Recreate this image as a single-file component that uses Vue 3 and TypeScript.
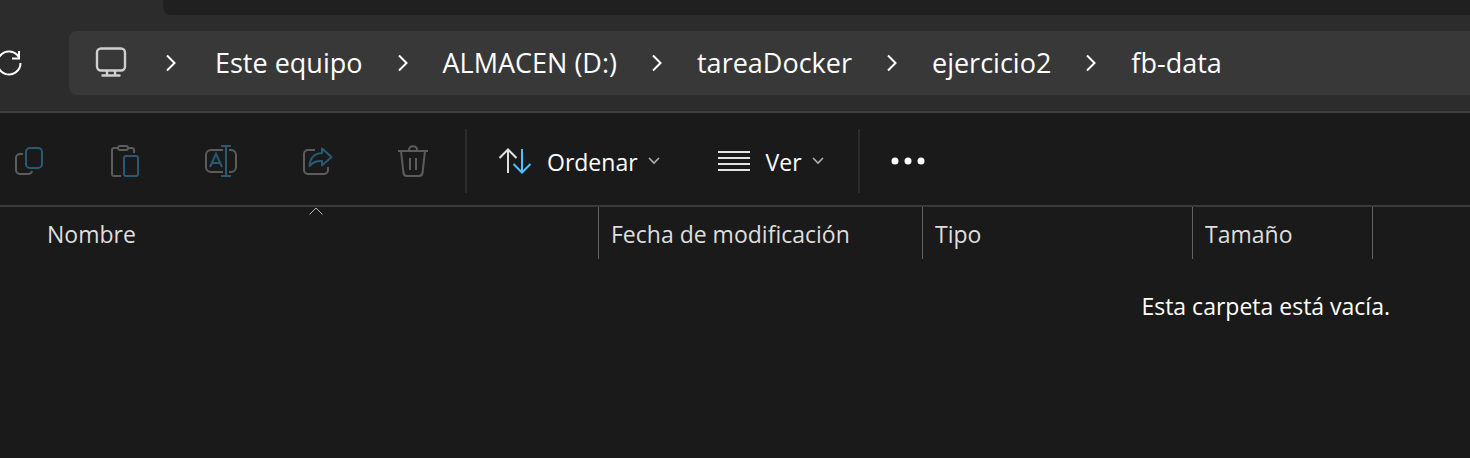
<script setup lang="ts">
interface Column {
  label: string
  className: string
  sorted: boolean
}

const crumbs: string[] = ['Este equipo', 'ALMACEN (D:)', 'tareaDocker', 'ejercicio2', 'fb-data']

const columns: Column[] = [
  { label: 'Nombre', className: 'col-name', sorted: true },
  { label: 'Fecha de modificación', className: 'col-date', sorted: false },
  { label: 'Tipo', className: 'col-type', sorted: false },
  { label: 'Tamaño', className: 'col-size', sorted: false },
]
</script>

<template>
  <div class="explorer">
    <header class="chrome">
      <div class="tabs"><div class="strip"></div></div>
      <div class="nav">
        <button class="refresh" type="button" aria-label="Actualizar">
          <svg width="32" height="32" viewBox="0 0 32 32" fill="none" stroke="#fff" stroke-width="2">
            <path d="M26.800 10A11.500 11.500 0 1 0 28.500 16" />
            <path d="M27 4v7.500h-7" />
          </svg>
        </button>
        <nav class="address" aria-label="Ruta">
          <svg class="pc" width="32" height="32" viewBox="0 0 32 32" fill="none" stroke="#d0d0d0" stroke-width="2.400">
            <rect x="2" y="1.500" width="28" height="22" rx="4" />
            <path d="M12 24v4M20 24v4M7.500 28.500h17" stroke-linecap="round" />
          </svg>
          <template v-for="crumb in crumbs" :key="crumb">
            <span class="separator">
              <svg width="12" height="18" viewBox="0 0 12 18" fill="none" stroke="#fff" stroke-width="2">
                <path d="M2 1.500 9.500 9 2 16.500" />
              </svg>
            </span>
            <a href="#" class="crumb">{{ crumb }}</a>
          </template>
        </nav>
      </div>
    </header>

    <div class="toolbar" role="toolbar" aria-label="Comandos">
      <div class="actions">
        <button type="button" disabled aria-label="Copiar">
          <svg width="36" height="36" viewBox="0 0 36 36" fill="none" stroke-width="2">
            <path class="dim" d="M11 11H8a4 4 0 0 0-4 4v12a4 4 0 0 0 4 4h8a4 4 0 0 0 4-3" />
            <rect class="accent" x="14" y="5" width="16" height="20" rx="4" />
          </svg>
        </button>
        <button type="button" disabled aria-label="Pegar">
          <svg width="36" height="36" viewBox="0 0 36 36" fill="none" stroke-width="2">
            <path class="dim" d="M10 5H6a2 2 0 0 0-2 2v24a2 2 0 0 0 2 2h7M20 5h4a2 2 0 0 1 2 2v3" />
            <rect class="dim" x="10" y="3" width="10" height="4" rx="2" />
            <rect class="accent" x="16" y="13" width="14" height="20" rx="2" />
          </svg>
        </button>
        <button type="button" disabled aria-label="Cambiar nombre">
          <svg width="36" height="36" viewBox="0 0 36 36" fill="none" stroke-width="2">
            <path class="dim" d="M19 7H7a5 5 0 0 0-5 5v12a5 5 0 0 0 5 5h12M25 7h2a5 5 0 0 1 5 5v12a5 5 0 0 1-5 5h-2" />
            <path class="accent" d="M6 24 12 11l6 13M8 20h8M22 3v30M17 3h10M17 33h10" />
          </svg>
        </button>
        <button type="button" disabled aria-label="Compartir">
          <svg width="36" height="36" viewBox="0 0 36 36" fill="none" stroke-width="2">
            <path class="dim" d="M15 7H8a4 4 0 0 0-4 4v16a4 4 0 0 0 4 4h16a4 4 0 0 0 4-4v-3" />
            <path class="accent" d="M22 5.500 31.500 14 22 22.500V18C16 17.500 13 19 9.500 23 10 15 14 10.500 22 10Z" stroke-linejoin="round" />
          </svg>
        </button>
        <button type="button" disabled aria-label="Eliminar">
          <svg class="dim" width="36" height="36" viewBox="0 0 36 36" fill="none" stroke-width="2">
            <path d="M2 8h30M13 7c0-5 8-5 8 0M5 8l2.500 22a3.500 3.500 0 0 0 3.500 3h12a3.500 3.500 0 0 0 3.500-3L29 8M14 15v12M20 15v12" />
          </svg>
        </button>
      </div>
      <div class="group">
        <button class="menu" type="button">
          <svg width="36" height="36" viewBox="0 0 36 36" fill="none" stroke-width="2">
            <path stroke="#e0e0e0" d="M11 30V6M2.500 15 11 6.500l8.500 8.500" />
            <path stroke="#4cc2ff" d="M25 6v24M16.500 21 25 29.500l8.500-8.500" />
          </svg>
          <span>Ordenar</span>
          <svg width="12" height="8" viewBox="0 0 12 8" fill="none" stroke="#b0b0b0" stroke-width="1.600">
            <path d="m1 1 5 5 5-5" />
          </svg>
        </button>
        <button class="menu" type="button">
          <svg width="36" height="36" viewBox="0 0 36 36" fill="none" stroke="#e4e4e4" stroke-width="2">
            <path d="M2 9h32M2 15h32M2 21h32M2 27h32" />
          </svg>
          <span>Ver</span>
          <svg width="12" height="8" viewBox="0 0 12 8" fill="none" stroke="#b0b0b0" stroke-width="1.600">
            <path d="m1 1 5 5 5-5" />
          </svg>
        </button>
      </div>
      <button class="more" type="button" aria-label="Ver más">
        <svg width="34" height="8" viewBox="0 0 34 8" fill="#fff">
          <circle cx="4" cy="4" r="3.500" />
          <circle cx="17" cy="4" r="3.500" />
          <circle cx="30" cy="4" r="3.500" />
        </svg>
      </button>
    </div>

    <main>
      <table>
        <thead>
          <tr>
            <th v-for="col in columns" :key="col.label" :class="col.className" scope="col" :aria-sort="col.sorted ? 'ascending' : undefined">
              {{ col.label }}
              <svg v-if="col.sorted" class="sort-mark" width="14" height="8" viewBox="0 0 14 8" fill="none" stroke="#b8b8b8">
                <path d="m.5 7.500 6.500-6.500 6.500 6.500" />
              </svg>
            </th>
            <td></td>
          </tr>
        </thead>
      </table>
      <p class="empty">Esta carpeta está vacía.</p>
    </main>
  </div>
</template>

<style>
body {
  margin: 0;
  background: #1a1a1a;
}
</style>

<style scoped>
.explorer {
  min-height: 100vh;
  overflow: hidden;
  background: #1a1a1a;
  color: #fff;
  font-family: "Open Sans", "Noto Sans", sans-serif;
  font-size: 23px;
  line-height: 32px;
}

svg {
  display: block;
  flex: none;
}

button {
  display: flex;
  align-items: center;
  margin: 0;
  padding: 0;
  border: 0;
  background: none;
  color: inherit;
  font: inherit;
}

.chrome {
  background: #2c2c2c;
  border-bottom: 2px solid #3f3f3f;
}

.tabs {
  padding-left: 163px;
}

.strip {
  height: 15px;
  border-bottom-left-radius: 8px;
  background: #202020;
}

.nav {
  display: flex;
  align-items: center;
  padding: 16px 0;
}

.refresh {
  width: 69px;
  margin-left: -8px;
  margin-right: 8px;
}

.address {
  display: flex;
  flex: 1;
  align-items: center;
  height: 64px;
  padding-left: 26px;
  border-radius: 8px 0 0 8px;
  background: #383838;
  font-size: 27px;
  white-space: nowrap;
}

.separator {
  display: flex;
  justify-content: center;
  width: 80px;
}

.pc + .separator {
  width: 88px;
}

.crumb {
  color: inherit;
  text-decoration: none;
}

.toolbar {
  display: flex;
  align-items: center;
  height: 88px;
  padding: 4px 0 0 12px;
  border-bottom: 2px solid #3a3a3a;
}

.actions {
  display: flex;
  gap: 60px;
}

.dim {
  stroke: #5c5c5c;
}

.accent {
  stroke: #285a74;
}

.group {
  display: flex;
  align-items: center;
  gap: 56px;
  height: 64px;
  margin-left: 33px;
  padding: 0 34px 0 30px;
  border: solid #2c2c2c;
  border-width: 0 2px;
}

.menu {
  gap: 10px;
}

.menu span {
  padding: 2px 0 0 4px;
}

.more {
  margin-left: 31px;
}

table {
  width: 100%;
  border-collapse: separate;
  border-spacing: 0;
  table-layout: fixed;
}

th {
  position: relative;
  box-sizing: border-box;
  height: 52px;
  padding: 2px 12px 0;
  border-right: 1px solid #636363;
  color: #dedede;
  font-weight: 400;
  text-align: left;
}

.col-name {
  width: 599px;
  padding-left: 47px;
}

.col-date {
  width: 324px;
}

.col-type {
  width: 270px;
}

.col-size {
  width: 180px;
}

td {
  padding: 0;
}

.sort-mark {
  position: absolute;
  top: 0;
  right: 275px;
}

.empty {
  margin: 31px 80px 0 0;
  text-align: right;
}
</style>
